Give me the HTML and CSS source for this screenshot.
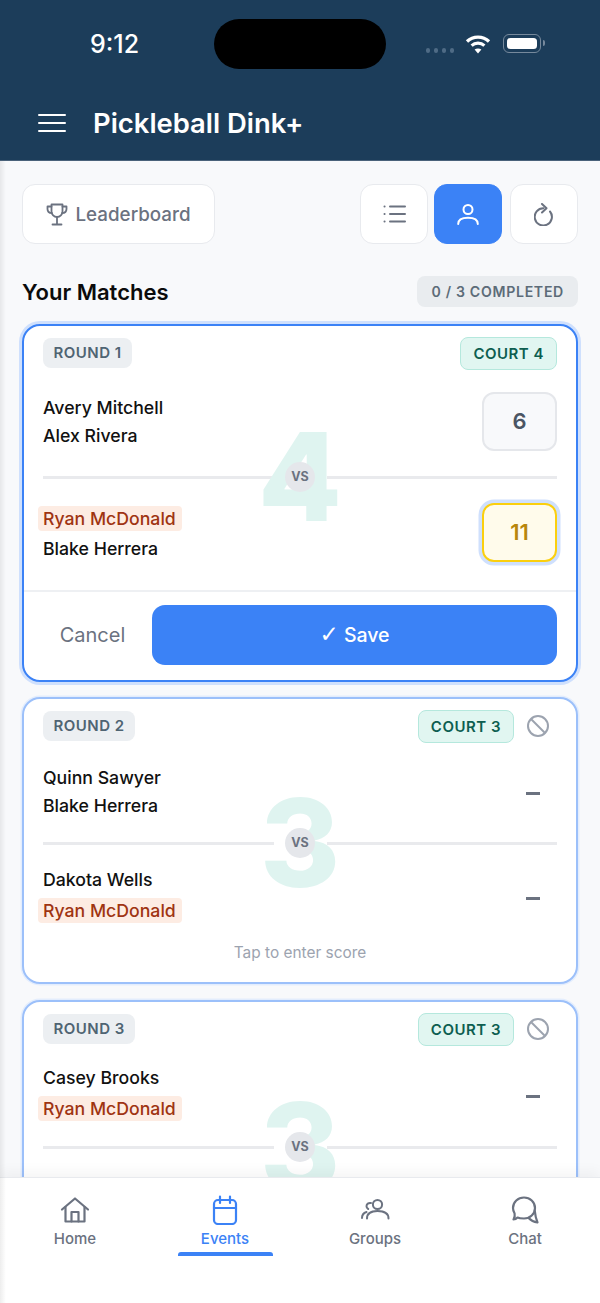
FILE: index.html
```html
<!DOCTYPE html>
<html lang="en">
<head>
  <meta charset="UTF-8" />
  <meta name="viewport" content="width=device-width, initial-scale=1.0"/>
  <title>Pickleball Dink+</title>
  <link rel="stylesheet" href="styles.css">
</head>
<body>
  <div class="app">
    <!-- Header -->
    <header class="header">
      <div class="status-bar">
        <span class="clock">9:12</span>
        <div class="status-icons">
          <div class="signal"><i></i><i></i><i></i><i></i></div>
          <svg class="wifi" width="26" height="20" viewBox="0 0 26 20" fill="none" stroke="#fff" stroke-width="3.2">
            <path d="M2 7.5C8 1.6 18 1.6 24 7.5"/>
            <path d="M6.6 11.6C10.2 8.4 15.8 8.4 19.4 11.6"/>
            <path d="M13 19.5L9.6 15.6C11.5 14 14.5 14 16.4 15.6Z" fill="#fff" stroke="none"/>
          </svg>
          <div class="battery"><div class="battery-fill"></div></div>
        </div>
      </div>
      <div class="title-row">
        <div class="menu-btn"><span></span><span></span><span></span></div>
        <h1 class="app-title">Pickleball Dink+</h1>
      </div>
    </header>
    <div class="island"></div>

    <!-- Content -->
    <main class="content">
      <div class="toolbar">
        <button class="tool-btn leaderboard-btn">
          <svg width="22" height="23" viewBox="0 0 22 23" fill="none" stroke="#6b7280" stroke-width="1.8" stroke-linecap="round" stroke-linejoin="round">
            <path d="M5.5 1.5H16.5V8.5A5.5 5.5 0 0 1 5.5 8.5Z"/>
            <path d="M5.5 3.5H1.5V6C1.5 8.5 3.2 10 6 10.2"/>
            <path d="M16.5 3.5H20.5V6C20.5 8.5 18.8 10 16 10.2"/>
            <path d="M11 14V21"/>
            <path d="M6.5 21.5H15.5"/>
          </svg>
          Leaderboard
        </button>
        <div class="view-btns">
          <button class="tool-btn icon-btn">
            <svg width="23" height="18" viewBox="0 0 23 18" fill="none" stroke="#6b7280" stroke-width="2" stroke-linecap="round">
              <path d="M7 1.5H22M7 9H22M7 16.5H22"/>
              <path d="M1.5 1.5H1.6M1.5 9H1.6M1.5 16.5H1.6"/>
            </svg>
          </button>
          <button class="tool-btn icon-btn active">
            <svg width="22" height="21" viewBox="0 0 22 21" fill="none" stroke="#fff" stroke-width="2" stroke-linecap="round">
              <circle cx="11" cy="5.5" r="4.5"/>
              <path d="M1.2 20C1.2 15.5 5 13.8 11 13.8S20.8 15.5 20.8 20"/>
            </svg>
          </button>
          <button class="tool-btn icon-btn">
            <svg width="20" height="23" viewBox="0 0 20 23" fill="none" stroke="#6b7280" stroke-width="2" stroke-linecap="round" stroke-linejoin="round">
              <path d="M16 8.5A8.6 8.6 0 1 1 9.5 5.3"/>
              <path d="M8 1L12.5 5.3L8 9.5"/>
            </svg>
          </button>
        </div>
      </div>

      <div class="section-head">
        <h2>Your Matches</h2>
        <span class="progress-badge">0 / 3 COMPLETED</span>
      </div>

      <!-- Round 1, score entry open -->
      <section class="card editing">
        <div class="card-head">
          <span class="round-pill">ROUND 1</span>
          <span class="court-pill">COURT 4</span>
        </div>
        <div class="team">
          <div class="names">
            <span class="name">Avery Mitchell</span>
            <span class="name">Alex Rivera</span>
          </div>
          <div class="score-box">6</div>
        </div>
        <div class="vs-row">
          <span class="court-num">4</span>
          <span class="vs-line"></span><span class="vs">VS</span><span class="vs-line"></span>
        </div>
        <div class="team">
          <div class="names">
            <span class="name me">Ryan McDonald</span>
            <span class="name">Blake Herrera</span>
          </div>
          <div class="score-box focused">11</div>
        </div>
        <div class="actions">
          <button class="cancel-btn">Cancel</button>
          <button class="save-btn"><span class="check">✓</span> Save</button>
        </div>
      </section>

      <!-- Round 2 -->
      <section class="card">
        <div class="card-head">
          <span class="round-pill">ROUND 2</span>
          <span class="court-pill">COURT 3</span>
          <svg class="ban" width="24" height="24" viewBox="0 0 24 24" fill="none" stroke="#9ca3af" stroke-width="2">
            <circle cx="12" cy="12" r="10"/>
            <path d="M5 5L19 19"/>
          </svg>
        </div>
        <div class="team">
          <div class="names">
            <span class="name">Quinn Sawyer</span>
            <span class="name">Blake Herrera</span>
          </div>
          <div class="score-empty"><span></span></div>
        </div>
        <div class="vs-row">
          <span class="court-num">3</span>
          <span class="vs-line"></span><span class="vs">VS</span><span class="vs-line"></span>
        </div>
        <div class="team">
          <div class="names">
            <span class="name">Dakota Wells</span>
            <span class="name me">Ryan McDonald</span>
          </div>
          <div class="score-empty"><span></span></div>
        </div>
        <p class="hint">Tap to enter score</p>
      </section>

      <!-- Round 3, runs on under the tab bar -->
      <section class="card last">
        <div class="card-head">
          <span class="round-pill">ROUND 3</span>
          <span class="court-pill">COURT 3</span>
          <svg class="ban" width="24" height="24" viewBox="0 0 24 24" fill="none" stroke="#9ca3af" stroke-width="2">
            <circle cx="12" cy="12" r="10"/>
            <path d="M5 5L19 19"/>
          </svg>
        </div>
        <div class="team">
          <div class="names">
            <span class="name">Casey Brooks</span>
            <span class="name me">Ryan McDonald</span>
          </div>
          <div class="score-empty"><span></span></div>
        </div>
        <div class="vs-row">
          <span class="court-num">3</span>
          <span class="vs-line"></span><span class="vs">VS</span><span class="vs-line"></span>
        </div>
      </section>
    </main>

    <!-- Tab bar -->
    <nav class="tabbar">
      <div class="tab">
        <svg width="30" height="27" viewBox="0 0 30 27" fill="none" stroke="#6b7280" stroke-width="2.2" stroke-linecap="round" stroke-linejoin="round">
          <path d="M2 13L15 2L28 13"/>
          <path d="M5.5 10.5V25H24.5V10.5"/>
          <path d="M11.5 25V15.5H18.5V25"/>
        </svg>
        <span>Home</span>
      </div>
      <div class="tab active">
        <svg width="26" height="30" viewBox="0 0 26 30" fill="none" stroke="#3b82f6" stroke-width="2.2" stroke-linecap="round" stroke-linejoin="round">
          <rect x="2" y="5" width="22" height="24" rx="4"/>
          <path d="M2 13H24"/>
          <path d="M8 1.5V8M18 1.5V8"/>
        </svg>
        <span>Events</span>
      </div>
      <div class="tab">
        <svg width="30" height="27" viewBox="0 0 30 27" fill="none" stroke="#6b7280" stroke-width="2" stroke-linecap="round" stroke-linejoin="round">
          <circle cx="17.5" cy="8" r="4.6"/>
          <path d="M7 22C7 16.5 11 14.5 17.5 14.5S28.5 16.5 28.5 22"/>
          <path d="M11 6.5C8.5 6 6.5 7.5 6.5 9.8C6.5 11 7.2 12 8.2 12.5"/>
          <path d="M2 21.5C2 18.5 3.5 16.5 6.5 15.5"/>
        </svg>
        <span>Groups</span>
      </div>
      <div class="tab">
        <svg width="28" height="28" viewBox="0 0 28 28" fill="none" stroke="#6b7280" stroke-width="2.2" stroke-linecap="round" stroke-linejoin="round">
          <path d="M2.5 23.5C3.8 21.5 4 19.5 3.6 17.5C2.6 15.8 2 14 2 12C2 6 7 1.5 13 1.5S24 6 24 12C24 18 19 22.5 13 22.5C9.5 22.5 7.5 22 6.5 21.5C5.5 22.6 4 23.5 2.5 23.5Z"/>
          <path d="M23.8 15C24.2 19 25 23 26.5 26.5C23.5 26 20 24.5 17.5 22"/>
        </svg>
        <span>Chat</span>
      </div>
    </nav>
    <div class="edge-shade"></div>
  </div>
</body>
</html>
```

FILE: styles.css
```css
* {
  box-sizing: border-box;
}

body {
  margin: 0;
  background: #f8f9fb;
  font-family: Inter, 'Liberation Sans', sans-serif;
}

button {
  font-family: inherit;
  cursor: pointer;
}

.app {
  position: relative;
  display: flex;
  flex-direction: column;
  height: 1303px;
  overflow: hidden;
}

/* Header */
.header {
  flex: none;
  height: 161px;
  background: #1c3d5a;
  color: #fff;
  border-bottom: 1px solid #4a627a;
}

.status-bar {
  display: flex;
  justify-content: space-between;
  align-items: center;
  height: 88px;
  padding: 0 56px 0 90px;
}

.clock {
  font-size: 25px;
  font-weight: 500;
}

.status-icons {
  display: flex;
  align-items: center;
  gap: 11px;
  margin-top: -1px;
}

.signal {
  display: flex;
  gap: 3.5px;
  margin-top: 14px;
}

.signal i {
  width: 4.5px;
  height: 4.5px;
  border-radius: 50%;
  background: #4f6b85;
}

.battery {
  position: relative;
  width: 38px;
  height: 19px;
  padding: 3px;
  border: 1.5px solid #76899c;
  border-radius: 6px;
  margin-right: 3px;
  margin-left: 1px;
}

.battery::after {
  content: "";
  position: absolute;
  right: -5px;
  top: 5px;
  width: 2.5px;
  height: 6px;
  background: #76899c;
  border-radius: 0 2px 2px 0;
}

.battery-fill {
  height: 100%;
  background: #fff;
  border-radius: 3.5px;
}

.island {
  position: absolute;
  top: 19px;
  left: 214px;
  width: 172px;
  height: 50px;
  background: #000;
  border-radius: 25px;
}

.title-row {
  display: flex;
  align-items: center;
  gap: 27px;
  padding: 0 38px;
  height: 70px;
}

.menu-btn {
  display: flex;
  flex-direction: column;
  gap: 5.5px;
  width: 28px;
}

.menu-btn span {
  height: 2.6px;
  background: #fff;
  border-radius: 1px;
}

.app-title {
  margin: 0;
  font-size: 27.4px;
  font-weight: 600;
}

/* Content */
.content {
  flex: 1;
  min-height: 0;
  overflow: hidden;
  padding: 23px 22px 0;
}

.toolbar {
  display: flex;
  justify-content: space-between;
}

.tool-btn {
  display: flex;
  align-items: center;
  justify-content: center;
  height: 60px;
  background: #fff;
  border: 1.5px solid #e8eaee;
  border-radius: 13px;
  padding: 0;
}

.leaderboard-btn {
  width: 193px;
  gap: 7px;
  font-size: 18.8px;
  font-weight: 500;
  color: #6b7280;
}

.view-btns {
  display: flex;
  gap: 6px;
}

.icon-btn {
  width: 68px;
}

.icon-btn:last-child {
  margin-left: 2px;
}

.icon-btn.active {
  background: #3b82f6;
  border-color: #3b82f6;
}

.section-head {
  display: flex;
  justify-content: space-between;
  align-items: center;
  margin: 32px 0 17px;
}

.section-head h2 {
  margin: 0;
  font-size: 22px;
  font-weight: 600;
  color: #0b0b0b;
}

.progress-badge {
  height: 31px;
  line-height: 31px;
  padding: 0 14px;
  background: #e9ecef;
  border-radius: 8px;
  font-size: 14.1px;
  font-weight: 600;
  letter-spacing: 0.7px;
  color: #5c6b78;
}

/* Match cards */
.card {
  position: relative;
  background: #fff;
  border: 2px solid #9cc0fa;
  border-radius: 18px;
  padding: 11px 19px 20px;
  margin-bottom: 16px;
  box-shadow: 0 0 0 1.5px #e3edfd;
}

.card.editing {
  border-color: #3b82f6;
  box-shadow: 0 0 0 3px #cfe0fd;
  padding-bottom: 0;
  margin-bottom: 15px;
}

.card.last {
  height: 300px;
}

.card-head {
  display: flex;
  align-items: center;
  gap: 12px;
  height: 32px;
}

.round-pill {
  margin-right: auto;
  height: 30px;
  line-height: 30px;
  padding: 0 10.5px;
  background: #eceff2;
  border-radius: 8px;
  font-size: 15px;
  font-weight: 600;
  letter-spacing: 0.5px;
  color: #4f6472;
}

.court-pill {
  height: 33px;
  line-height: 31px;
  padding: 0 12px;
  background: #e1f6f1;
  border: 1.5px solid #b5e8dd;
  border-radius: 8px;
  font-size: 15px;
  font-weight: 600;
  letter-spacing: 0.5px;
  color: #0d5e50;
}

.ban {
  margin-right: 7px;
}

.team {
  position: relative;
  z-index: 1;
  display: flex;
  justify-content: space-between;
  align-items: center;
  height: 59px;
  margin-top: 20px;
}

.editing .team {
  margin-top: 23px;
}

.vs-row + .team {
  margin-top: 9px;
}

.editing .vs-row + .team {
  margin-top: 11px;
}

.names {
  display: flex;
  flex-direction: column;
  align-items: flex-start;
  gap: 6px;
}

.name {
  height: 22px;
  line-height: 22px;
  font-size: 17.7px;
  font-weight: 500;
  color: #111;
}

.name.me {
  height: 25px;
  line-height: 25px;
  margin: 1px 0 1px -5px;
  padding: 0 6px 0 5px;
  background: #fdece3;
  border-radius: 4px;
  color: #9f3412;
}

.score-box {
  width: 75px;
  height: 59px;
  line-height: 55px;
  text-align: center;
  background: #f8f9fb;
  border: 2px solid #e5e7eb;
  border-radius: 12px;
  font-size: 22px;
  font-weight: 600;
  color: #4b5563;
}

.score-box.focused {
  background: #fffbeb;
  border-color: #fbcf0e;
  box-shadow: 0 0 0 3.5px #cfe0fd;
  color: #b8860b;
}

.score-empty {
  display: flex;
  justify-content: center;
  width: 49px;
}

.score-empty span {
  width: 14px;
  height: 3px;
  margin-top: 3px;
  background: #6b7280;
}

.vs-row {
  position: relative;
  display: flex;
  align-items: center;
  height: 30px;
  margin-top: 7px;
}

.editing .vs-row {
  margin-top: 11px;
}

.last .vs-row {
  margin-top: 8px;
}

.vs-line {
  flex: 1;
  height: 3px;
  background: #e9eaed;
}

.vs {
  position: relative;
  z-index: 1;
  width: 30px;
  height: 30px;
  line-height: 30px;
  margin: 0 11.5px;
  text-align: center;
  background: #e5e7eb;
  border-radius: 50%;
  font-size: 12.5px;
  font-weight: 700;
  color: #6b7280;
}

.court-num {
  position: absolute;
  left: 50%;
  top: 50%;
  transform: translate(-50%, -50%);
  font-size: 122px;
  font-weight: 800;
  line-height: 1;
  color: #dff4f0;
}

.hint {
  margin: 18px 0 0;
  line-height: 18px;
  text-align: center;
  font-size: 15.4px;
  color: #9ca3af;
}

.actions {
  display: flex;
  align-items: center;
  margin: 28px -19px 0;
  padding: 13px 19px 15px;
  border-top: 2px solid #eef0f3;
  position: relative;
  z-index: 1;
}

.cancel-btn {
  width: 109px;
  background: none;
  border: 0;
  padding: 0 10px 0 0;
  font-size: 20px;
  font-weight: 400;
  color: #6b7280;
}

.save-btn {
  flex: 1;
  height: 60px;
  background: #3b82f6;
  border: 0;
  border-radius: 13px;
  font-size: 19.5px;
  font-weight: 500;
  color: #fff;
}

.check {
  font-family: 'DejaVu Sans', sans-serif;
  font-size: 23px;
  line-height: 1;
}

/* Tab bar */
.tabbar {
  position: relative;
  z-index: 2;
  flex: none;
  display: grid;
  grid-template-columns: repeat(4, 150px);
  height: 126px;
  background: #fff;
  border-top: 1px solid #e8eaee;
  box-shadow: 0 -6px 12px rgba(0, 0, 0, 0.04);
}

.tab {
  position: relative;
  display: flex;
  flex-direction: column;
  align-items: center;
  height: 80px;
  padding-top: 17px;
  font-size: 15px;
  font-weight: 500;
  color: #6b7280;
}

.tab svg {
  height: 30px;
}

.tab span {
  margin-top: 4px;
  line-height: 20px;
}

.tab.active {
  color: #3b82f6;
}

.tab.active::after {
  content: "";
  position: absolute;
  left: 28px;
  right: 27px;
  top: 74px;
  height: 4px;
  background: #3b82f6;
  border-radius: 3px 3px 0 0;
}

/* Soft shadow along the left edge of the screen */
.edge-shade {
  position: absolute;
  left: 0;
  top: 161px;
  bottom: 0;
  z-index: 3;
  width: 6px;
  background: linear-gradient(to right, rgba(0, 0, 0, 0.07), rgba(0, 0, 0, 0));
}
```
